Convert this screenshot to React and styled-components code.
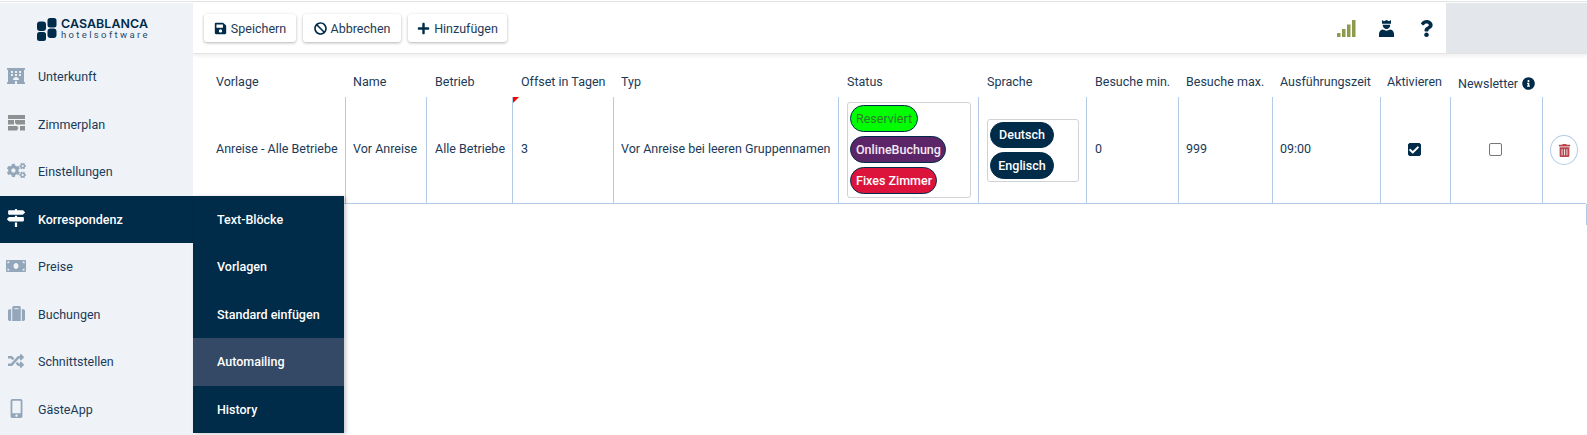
import React from "react";
import styled, { createGlobalStyle } from "styled-components";
import {
  FaHotel, FaCogs, FaMapSigns, FaMoneyBill, FaSuitcase, FaRandom, FaMobileAlt,
  FaSave, FaBan, FaPlus, FaQuestion, FaInfoCircle, FaTrashAlt, FaCheck,
} from "react-icons/fa";

const navy = "#002b49";
const ink = "#1b3a57";
const rule = "#b3cbe6";

const Global = createGlobalStyle`
  html, body { margin: 0; padding: 0; background: #fff; height: 100%; overflow: hidden; }
  body { font-family: Roboto, "Liberation Sans", sans-serif; font-size: 12.5px; color: ${ink}; }
`;

const Page = styled.div`
  width: 1587px;
  height: 435px;
  display: flex;
  flex-direction: column;
  overflow: hidden;
`;
const TopStrip = styled.div`
  height: 3px;
  flex: none;
  box-sizing: border-box;
  border-top: 1px solid #fff;
  border-bottom: 1px solid #fff;
  background: #e2e3e5;
`;
const Body = styled.div`
  flex: 1;
  display: flex;
  min-height: 0;
`;
const Sidebar = styled.nav`
  width: 193px;
  flex: none;
  background: #eff3f8;
  position: relative;
  z-index: 3;
`;
const Logo = styled.div`
  height: 50px;
  box-sizing: border-box;
  display: flex;
  align-items: center;
  padding: 2px 0 0 37px;
  gap: 4px;
`;
const LogoText = styled.div`
  display: flex;
  flex-direction: column;
  color: ${navy};
`;
const LogoTop = styled.span`
  font: 600 12.4px/12px Inter, "Liberation Sans", sans-serif;
  letter-spacing: 0.1px;
`;
const LogoBottom = styled.span`
  font: 400 9.5px/10px Roboto, sans-serif;
  letter-spacing: 2.35px;
  color: #27496a;
`;
const NavItem = styled.div`
  height: 47.5px;
  position: relative;
  display: flex;
  align-items: center;
  padding-left: 6px;
  color: ${p => (p.$active ? "#fff" : ink)};
  background: ${p => (p.$active ? navy : "transparent")};
  font-weight: ${p => (p.$active ? 500 : 400)};
`;
const NavIcon = styled.span`
  width: 20px;
  height: 20px;
  margin-right: 12px;
  display: flex;
  align-items: center;
  justify-content: center;
  color: ${p => (p.$active ? "#fff" : "#94a7ba")};
  font-size: 18px;
  position: relative;
  top: -1px;
`;
const Flyout = styled.div`
  position: absolute;
  left: 193px;
  top: 0;
  width: 151px;
  background: ${navy};
  box-shadow: 2px 1px 4px rgba(0, 0, 0, 0.22);
`;
const FlyoutItem = styled.div`
  height: 47.5px;
  display: flex;
  align-items: center;
  padding-left: 24px;
  color: #fff;
  font-weight: 500;
  background: ${p => (p.$active ? "#344966" : "transparent")};
`;
const Main = styled.main`
  flex: 1;
  min-width: 0;
  display: flex;
  flex-direction: column;
`;
const Toolbar = styled.div`
  height: 51px;
  flex: none;
  box-sizing: border-box;
  display: flex;
  align-items: stretch;
  background: #fff;
  border-bottom: 1px solid #e4e4e4;
  box-shadow: 0 2px 4px rgba(0, 0, 0, 0.07);
  position: relative;
  z-index: 1;
`;
const Actions = styled.div`
  flex: 1;
  display: flex;
  align-items: flex-start;
  gap: 7px;
  padding: 11px 0 0 11px;
`;
const ToolButton = styled.div`
  height: 28px;
  width: ${p => p.$w}px;
  box-sizing: border-box;
  display: flex;
  align-items: center;
  justify-content: center;
  gap: 4px;
  border-radius: 3px;
  background: #fff;
  color: ${ink};
  box-shadow: 0 1px 3px rgba(0, 0, 0, 0.3);
  svg { color: ${navy}; font-size: 13px; }
`;
const Status = styled.div`
  display: flex;
  align-items: center;
  height: 100%;
`;
const StatusIcon = styled.div`
  width: 40px;
  display: flex;
  justify-content: center;
  color: ${navy};
`;
const GreyPanel = styled.div`
  width: 141px;
  flex: none;
  background: #e3e6ea;
`;
const TableWrap = styled.div`
  flex: 1;
  padding-left: 15px;
  position: relative;
`;
const Table = styled.table`
  table-layout: fixed;
  width: 1378px;
  border-collapse: separate;
  border-spacing: 0;
  color: ${ink};
  font-size: 12.5px;
`;
const Th = styled.th`
  height: 43px;
  box-sizing: border-box;
  padding: 0 0 ${p => (p.$low ? 6 : 8)}px ${p => p.$pad ?? 8}px;
  text-align: left;
  vertical-align: bottom;
  font-weight: 400;
  white-space: nowrap;
`;
const Td = styled.td`
  height: 107px;
  box-sizing: border-box;
  padding: 0 ${p => (p.$center ? 3 : 0)}px 3px ${p => (p.$center ? 0 : p.$tight ? 7 : 8)}px;
  border-bottom: 1px solid ${rule};
  border-right: ${p => (p.$last ? "none" : `1px solid ${rule}`)};
  position: relative;
  white-space: nowrap;
  text-align: ${p => (p.$center ? "center" : "left")};
`;
const Corner = styled.span`
  position: absolute;
  left: 0;
  top: 0;
  width: 0;
  height: 0;
  border-top: 6px solid #f00;
  border-right: 6px solid transparent;
`;
const ChipBox = styled.div`
  box-sizing: border-box;
  width: ${p => p.$w}px;
  height: ${p => p.$h}px;
  margin-top: 3px;
  border: 1px solid #d0d3d6;
  border-radius: 3px;
  padding: 2px;
  display: flex;
  flex-direction: column;
  align-items: flex-start;
  gap: 4px;
`;
const Chip = styled.div`
  box-sizing: border-box;
  height: 27px;
  width: ${p => p.$w}px;
  padding-left: 5px;
  display: flex;
  align-items: center;
  border-radius: 14px;
  border: 1px solid ${navy};
  background: ${p => p.$bg};
  color: ${p => p.$fg};
  font-weight: ${p => p.$weight || 500};
  font-size: 12.5px;
`;
const LangChip = styled(Chip)`
  justify-content: center;
  padding-left: 0;
`;
const CheckBox = styled.span`
  display: inline-flex;
  width: 13px;
  height: 13px;
  box-sizing: border-box;
  vertical-align: middle;
  align-items: center;
  justify-content: center;
  border-radius: 2px;
  background: ${p => (p.$on ? navy : "#fff")};
  border: 1px solid ${p => (p.$on ? navy : "#767676")};
  color: #fff;
  font-size: 10px;
`;
const DeleteButton = styled.div`
  width: 28px;
  height: 30px;
  margin-top: 3px;
  box-sizing: border-box;
  border: 1px solid ${rule};
  border-radius: 50%;
  display: flex;
  align-items: center;
  justify-content: center;
  color: #b8474d;
  font-size: 13px;
`;
const InfoIcon = styled.span`
  color: ${navy};
  font-size: 13px;
  margin-left: 4px;
  position: relative;
  top: 2px;
`;
const EdgeLine = styled.span`
  position: absolute;
  left: 1393px;
  top: 150px;
  width: 1px;
  height: 21px;
  background: ${rule};
`;

const PlanIcon = () => (
  <svg width="17" height="16" viewBox="0 0 17 16" fill="currentColor" style={{ color: "#8f9092" }}>
    <rect x="0" y="0" width="17" height="4" />
    <rect x="0" y="5" width="6" height="4.5" />
    <path d="M7 5h10v4.500H8.500L7 8z" />
    <path d="M0 11h9l1.500 2L9 15.500H0z" />
    <rect x="12" y="11" width="5" height="4.500" />
  </svg>
);
const LogoMark = () => (
  <svg width="20" height="23" viewBox="0 0 20 23" fill={navy}>
    <rect x="0" y="3.500" width="9" height="9.500" rx="3" />
    <rect x="10.500" y="0" width="9" height="9.500" rx="2.500" />
    <rect x="0" y="14" width="9" height="9" rx="2.500" />
    <rect x="10.500" y="10.500" width="9" height="9.500" rx="3" />
  </svg>
);
const SignalIcon = () => (
  <svg width="19" height="17" viewBox="0 0 19 17" fill="#8e9a4c">
    <rect x="0" y="13" width="3.500" height="4" />
    <rect x="5" y="9" width="3.500" height="8" />
    <rect x="10" y="4.500" width="3.500" height="12.500" />
    <rect x="15" y="0" width="3.500" height="17" />
  </svg>
);
const OfficerIcon = () => (
  <svg width="15" height="17" viewBox="0 0 15 17" fill={navy}>
    <path d="M3 0l2 1.200L7.500 0 10 1.200 12 0v3.800H3z" />
    <path d="M3.700 4.800h7.600c0 2.600-1.600 4.200-3.800 4.200S3.700 7.400 3.700 4.800z" />
    <path d="M3.500 9.500l4 1.200 4-1.200c2 .4 3.500 2.400 3.500 4.500v3H0v-3c0-2.100 1.500-4.100 3.500-4.500z" />
  </svg>
);

const navTop = [
  { label: "Unterkunft", icon: <FaHotel /> },
  { label: "Zimmerplan", icon: <PlanIcon /> },
  { label: "Einstellungen", icon: <FaCogs style={{ fontSize: 19 }} /> },
];
const navBottom = [
  { label: "Preise", icon: <FaMoneyBill style={{ fontSize: 20 }} /> },
  { label: "Buchungen", icon: <FaSuitcase style={{ fontSize: 17 }} /> },
  { label: "Schnittstellen", icon: <FaRandom style={{ fontSize: 16 }} /> },
  { label: "GästeApp", icon: <FaMobileAlt style={{ fontSize: 19 }} /> },
];
const flyout = ["Text-Blöcke", "Vorlagen", "Standard einfügen", "Automailing", "History"];
const columns = [138, 81, 86, 101, 225, 140, 108, 92, 94, 108, 70, 92, 43];

export default function App() {
  return (
    <Page>
      <Global />
      <TopStrip />
      <Body>
        <Sidebar>
          <Logo>
            <LogoMark />
            <LogoText>
              <LogoTop>CASABLANCA</LogoTop>
              <LogoBottom>hotelsoftware</LogoBottom>
            </LogoText>
          </Logo>
          {navTop.map(n => (
            <NavItem key={n.label}>
              <NavIcon>{n.icon}</NavIcon>
              {n.label}
            </NavItem>
          ))}
          <NavItem $active>
            <NavIcon $active><FaMapSigns /></NavIcon>
            Korrespondenz
            <Flyout>
              {flyout.map(f => (
                <FlyoutItem key={f} $active={f === "Automailing"}>{f}</FlyoutItem>
              ))}
            </Flyout>
          </NavItem>
          {navBottom.map(n => (
            <NavItem key={n.label}>
              <NavIcon>{n.icon}</NavIcon>
              {n.label}
            </NavItem>
          ))}
        </Sidebar>
        <Main>
          <Toolbar>
            <Actions>
              <ToolButton $w={92}><FaSave />Speichern</ToolButton>
              <ToolButton $w={98}><FaBan />Abbrechen</ToolButton>
              <ToolButton $w={99}><FaPlus />Hinzufügen</ToolButton>
            </Actions>
            <Status>
              <StatusIcon><SignalIcon /></StatusIcon>
              <StatusIcon><OfficerIcon /></StatusIcon>
              <StatusIcon><FaQuestion style={{ fontSize: 17 }} /></StatusIcon>
            </Status>
            <GreyPanel />
          </Toolbar>
          <TableWrap>
            <Table>
              <colgroup>
                {columns.map((w, i) => <col key={i} style={{ width: w }} />)}
              </colgroup>
              <thead>
                <tr>
                  <Th>Vorlage</Th>
                  <Th $pad={7}>Name</Th>
                  <Th>Betrieb</Th>
                  <Th>Offset in Tagen</Th>
                  <Th $pad={7}>Typ</Th>
                  <Th>Status</Th>
                  <Th>Sprache</Th>
                  <Th>Besuche min.</Th>
                  <Th $pad={7}>Besuche max.</Th>
                  <Th $pad={7}>Ausführungszeit</Th>
                  <Th $pad={6}>Aktivieren</Th>
                  <Th $low $pad={7}>Newsletter<InfoIcon><FaInfoCircle /></InfoIcon></Th>
                  <Th />
                </tr>
              </thead>
              <tbody>
                <tr>
                  <Td>Anreise - Alle Betriebe</Td>
                  <Td $tight>Vor Anreise</Td>
                  <Td>Alle Betriebe</Td>
                  <Td><Corner />3</Td>
                  <Td $tight>Vor Anreise bei leeren Gruppennamen</Td>
                  <Td>
                    <ChipBox $w={124} $h={96}>
                      <Chip $w={68} $bg="#00ff00" $fg="#2f7a2f" $weight={400}>Reserviert</Chip>
                      <Chip $w={96} $bg="#5c2568" $fg="#f3e9f5">OnlineBuchung</Chip>
                      <Chip $w={87} $bg="#dc143c" $fg="#fff">Fixes Zimmer</Chip>
                    </ChipBox>
                  </Td>
                  <Td>
                    <ChipBox $w={92} $h={63}>
                      <LangChip $w={64} $bg={navy} $fg="#fff">Deutsch</LangChip>
                      <LangChip $w={64} $bg={navy} $fg="#fff">Englisch</LangChip>
                    </ChipBox>
                  </Td>
                  <Td>0</Td>
                  <Td $tight>999</Td>
                  <Td $tight>09:00</Td>
                  <Td $center>
                    <CheckBox $on><FaCheck /></CheckBox>
                  </Td>
                  <Td $center>
                    <CheckBox />
                  </Td>
                  <Td $last $tight>
                    <DeleteButton><FaTrashAlt /></DeleteButton>
                  </Td>
                </tr>
              </tbody>
            </Table>
            <EdgeLine />
          </TableWrap>
        </Main>
      </Body>
    </Page>
  );
}
